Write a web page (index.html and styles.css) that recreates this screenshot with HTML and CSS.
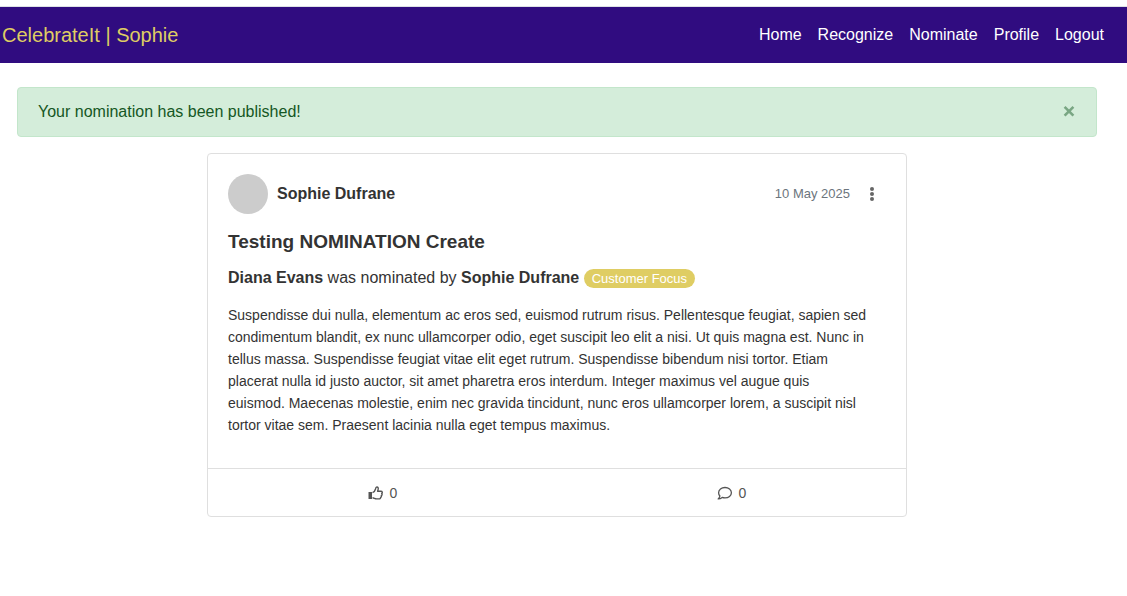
FILE: index.html
```html
<!DOCTYPE html>
<html lang="en">
<head>
<meta charset="utf-8">
<meta name="viewport" content="width=device-width, initial-scale=1">
<title>CelebrateIt</title>
<link rel="stylesheet" href="styles.css">
</head>
<body>
<header class="navbar">
  <a class="brand" href="#">CelebrateIt | Sophie</a>
  <nav class="nav-links">
    <a href="#">Home</a>
    <a href="#">Recognize</a>
    <a href="#">Nominate</a>
    <a href="#">Profile</a>
    <a href="#">Logout</a>
  </nav>
</header>
<main class="page">
  <div class="alert" role="alert">
    <span>Your nomination has been published!</span>
    <button class="alert-close" type="button" aria-label="Close">
      <svg width="14" height="14" viewBox="0 0 14 14" aria-hidden="true"><path d="M2.600 1.800l8.800 8.800M11.400 1.800L2.600 10.600" fill="none" stroke="currentColor" stroke-width="2.600"/></svg>
    </button>
  </div>
  <article class="card">
    <div class="card-body">
      <div class="card-head">
        <span class="avatar"></span>
        <strong class="author">Sophie Dufrane</strong>
        <time class="date" datetime="2025-05-10">10 May 2025</time>
        <button class="menu" type="button" aria-label="Options">
          <svg width="4" height="14" viewBox="0 0 4 14" fill="currentColor" aria-hidden="true"><circle cx="2" cy="2" r="2"/><circle cx="2" cy="7" r="2"/><circle cx="2" cy="12" r="2"/></svg>
        </button>
      </div>
      <h1 class="title">Testing NOMINATION Create</h1>
      <p class="summary"><strong>Diana Evans</strong> was nominated by <strong>Sophie Dufrane</strong> <span class="badge">Customer Focus</span></p>
      <p class="text">Suspendisse dui nulla, elementum ac eros sed, euismod rutrum risus. Pellentesque feugiat, sapien sed condimentum blandit, ex nunc ullamcorper odio, eget suscipit leo elit a nisi. Ut quis magna est. Nunc in tellus massa. Suspendisse feugiat vitae elit eget rutrum. Suspendisse bibendum nisi tortor. Etiam placerat nulla id justo auctor, sit amet pharetra eros interdum. Integer maximus vel augue quis euismod. Maecenas molestie, enim nec gravida tincidunt, nunc eros ullamcorper lorem, a suscipit nisl tortor vitae sem. Praesent lacinia nulla eget tempus maximus.</p>
    </div>
    <footer class="card-foot">
      <button class="action" type="button" aria-label="Like, 0">
        <svg width="16" height="16" viewBox="0 0 16 16" aria-hidden="true"><path d="M.5 7H4v7H.5z" fill="currentColor"/><path d="M4.500 7.600c1.700-.5 2.700-2.300 3-3.600.2-1.100.4-2 1.300-2 1.400 0 1.700 1.300 1.300 2.600L9.600 6.300h3.200c1.700 0 2 1.700.9 2.400.7.700.4 1.700-.4 2 .3.800 0 1.500-.7 1.700.1 1-.6 1.500-1.500 1.500H8.500c-1.500 0-2.500-1-4-1.100" fill="none" stroke="currentColor" stroke-width="1.400" stroke-linejoin="round"/></svg>
        <span>0</span>
      </button>
      <button class="action" type="button" aria-label="Comments, 0">
        <svg width="16" height="16" viewBox="0 0 16 16" aria-hidden="true"><path d="M8 2.500c3.600 0 6.400 2.300 6.400 5.200s-2.800 5.200-6.400 5.200c-1 0-2-.2-2.800-.5-1.100.9-2.500 1.500-4 1.500.8-.8 1.500-1.800 1.700-2.900C2 10.100 1.600 9 1.600 7.700c0-2.900 2.800-5.200 6.400-5.200z" fill="none" stroke="currentColor" stroke-width="1.300" stroke-linejoin="round"/></svg>
        <span>0</span>
      </button>
    </footer>
  </article>
</main>
</body>
</html>
```
FILE: styles.css
```css
* {
  box-sizing: border-box;
}

body {
  margin: 0;
  padding-top: 6px;
  background: #fff;
  color: #333;
  font: 16px/24px "Liberation Sans", Arial, sans-serif;
}

a {
  text-decoration: none;
}

button {
  display: flex;
  align-items: center;
  justify-content: center;
  padding: 0;
  border: 0;
  background: none;
  font: inherit;
  cursor: pointer;
}

.navbar {
  display: flex;
  align-items: center;
  justify-content: space-between;
  min-height: 57px;
  padding: 0 23px 0 2px;
  border-top: 1px solid #dee2e6;
  background: #300c80;
}

.brand {
  color: #dfcd63;
  font-size: 20px;
}

.nav-links {
  display: flex;
  gap: 16px;
}

.nav-links a {
  color: #fff;
}

.page {
  padding: 24px 30px 24px 17px;
}

.alert {
  display: flex;
  align-items: center;
  justify-content: space-between;
  padding: 12px 20px;
  border: 1px solid #c3e6cb;
  border-radius: 4px;
  background: #d4edda;
  color: #155724;
}

.alert-close {
  width: 14px;
  height: 14px;
  color: #79a683;
}

.card {
  max-width: 700px;
  margin: 16px auto 0;
  border: 1px solid #dfdfdf;
  border-radius: 4px;
}

.card-body {
  padding: 20px 20px 32px;
}

.card-head {
  display: flex;
  align-items: center;
}

.avatar {
  width: 40px;
  height: 40px;
  margin-right: 9px;
  border-radius: 50%;
  background: #ccc;
}

.author {
  flex: 1;
}

.date {
  color: #6c757d;
  font-size: 13px;
}

.menu {
  width: 16px;
  height: 24px;
  margin: 0 6px 0 14px;
  color: #666;
}

.title {
  margin: 16px 0 12px;
  font-size: 19px;
  line-height: 24px;
}

.summary {
  margin: 0 0 14px;
}

.badge {
  display: inline-block;
  padding: 0 8px;
  border-radius: 10px;
  background: #dfcd63;
  color: #fff;
  font-size: 13px;
  line-height: 19px;
}

.text {
  max-width: 640px;
  margin: 0;
  font-size: 14px;
  line-height: 22px;
}

.card-foot {
  display: grid;
  grid-template-columns: 1fr 1fr;
  border-top: 1px solid #dfdfdf;
}

.action {
  gap: 6px;
  min-height: 47px;
  color: #555;
  font-size: 14px;
}
```
